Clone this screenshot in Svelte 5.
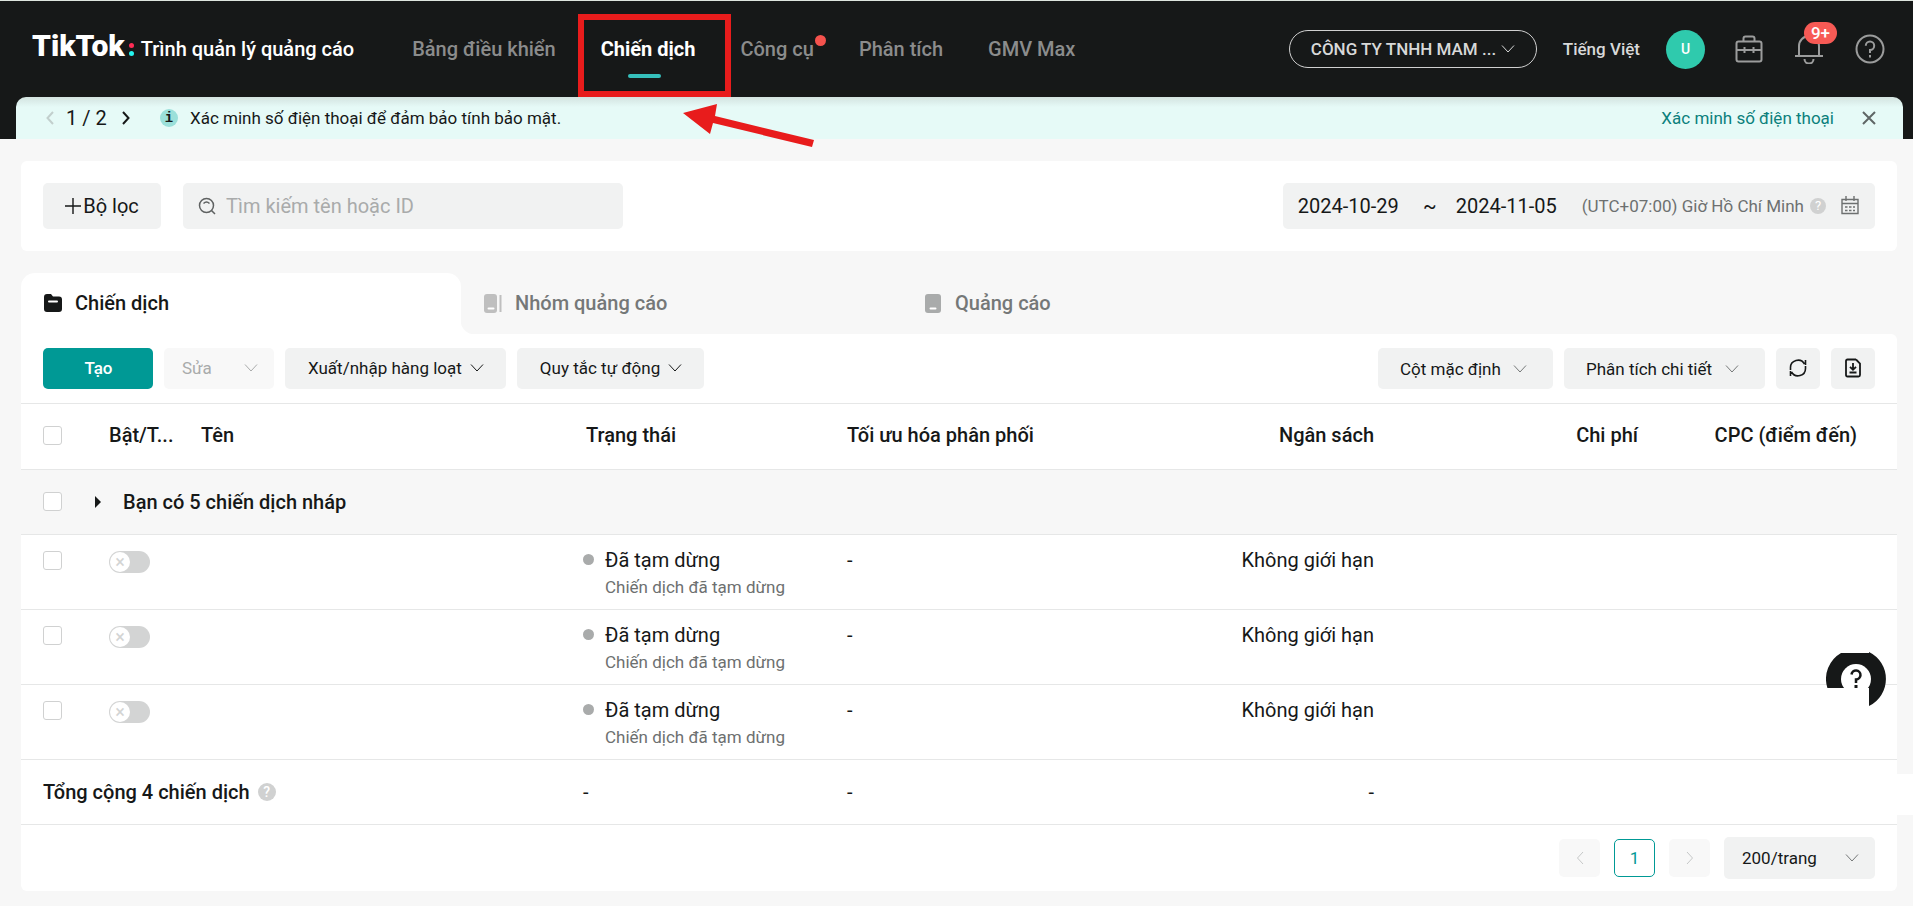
<script>
	const navItems = [
		{ label: "Bảng điều khiển" },
		{ label: "Chiến dịch", active: true },
		{ label: "Công cụ", dot: true },
		{ label: "Phân tích" },
		{ label: "GMV Max" },
	];

	const rows = [1, 2, 3];

	let search = "";
	let startDate = "2024-10-29";
	let endDate = "2024-11-05";
</script>

<header class="header">
	<a class="brand" href="#home">
		<strong>TikTok</strong>
		<span class="brand-dots"><i></i><i></i></span>
		<span class="brand-name">Trình quản lý quảng cáo</span>
	</a>

	<nav class="nav">
		{#each navItems as item}
			<a class="nav-link" class:active={item.active} href="#nav">
				{item.label}
				{#if item.dot}<span class="nav-dot"></span>{/if}
				{#if item.active}
					<span class="highlight"></span>
					<svg class="arrow" width="132" height="46" viewBox="0 0 132 46">
						<path d="M0 11 L34 2 L32 14 L131 38 L129 45 L30 21 L27 32 Z" fill="#e81c1c" />
					</svg>
				{/if}
			</a>
		{/each}
	</nav>

	<div class="account">
		<button class="company">
			CÔNG TY TNHH MAM ...
			<svg width="14" height="10" viewBox="0 0 14 10"><path d="M1 1.5 L7 8 L13 1.5" /></svg>
		</button>
		<button class="plain">Tiếng Việt</button>
		<button class="avatar">U</button>
		<div class="tools">
			<button class="tool" aria-label="Hộp công cụ">
				<svg width="28" height="28" viewBox="0 0 28 28">
					<rect x="1.5" y="6.5" width="25" height="20" rx="2" />
					<path d="M8.5 6.5 V3.5 Q8.5 1.5 10.5 1.5 H17.5 Q19.5 1.5 19.5 3.5 V6.5 M1.5 15 H26.5 M9.5 12 V18 M18.5 12 V18" />
				</svg>
			</button>
			<button class="tool" aria-label="Thông báo">
				<svg width="30" height="30" viewBox="0 0 30 30">
					<path d="M1 22 H29 M5 22 V12 A10 10 0 0 1 25 12 V22 M10.5 25 A4.5 4.5 0 0 0 19.5 25" />
				</svg>
				<span class="badge">9+</span>
			</button>
			<button class="tool" aria-label="Trợ giúp">
				<svg width="30" height="30" viewBox="0 0 30 30">
					<circle cx="15" cy="15" r="13.5" />
					<path d="M10.8 11.8 A4.2 4.2 0 1 1 15 16 V19 M15 21 V23.5" />
				</svg>
			</button>
		</div>
	</div>
</header>

<div class="banner-wrap">
	<div class="banner">
		<button class="step muted" aria-label="Trước" disabled>
			<svg width="8" height="14" viewBox="0 0 8 14"><path d="M7 1 L1.5 7 L7 13" /></svg>
		</button>
		<span class="count">1 / 2</span>
		<button class="step" aria-label="Sau">
			<svg width="8" height="14" viewBox="0 0 8 14"><path d="M1 1 L6.5 7 L1 13" /></svg>
		</button>
		<span class="info">i</span>
		<span>Xác minh số điện thoại để đảm bảo tính bảo mật.</span>
		<a class="verify" href="#verify">Xác minh số điện thoại</a>
		<button class="step close" aria-label="Đóng">
			<svg width="14" height="14" viewBox="0 0 14 14"><path d="M1 1 L13 13 M13 1 L1 13" /></svg>
		</button>
	</div>
</div>

<main>
	<section class="filters">
		<button class="filter">
			<svg width="16" height="16" viewBox="0 0 16 16"><path d="M8 0 V16 M0 8 H16" /></svg>
			Bộ lọc
		</button>
		<label class="search">
			<svg width="18" height="18" viewBox="0 0 18 18">
				<circle cx="8.5" cy="8.5" r="7" />
				<path d="M13.5 13.5 L17 17 M5.5 6.5 Q8.5 3.5 11.5 6.5" />
			</svg>
			<input type="text" placeholder="Tìm kiếm tên hoặc ID" aria-label="Tìm kiếm tên hoặc ID" bind:value={search} />
		</label>
		<div class="dates">
			<input type="text" aria-label="Ngày bắt đầu" bind:value={startDate} />
			<span class="tilde">~</span>
			<input type="text" aria-label="Ngày kết thúc" bind:value={endDate} />
			<span class="zone">(UTC+07:00) Giờ Hồ Chí Minh</span>
			<span class="hint small">?</span>
			<button class="calendar" aria-label="Lịch">
				<svg width="18" height="20" viewBox="0 0 18 20">
					<path d="M1 3.5 H17 V17.5 H1 Z M1 7.5 H17 M5 0 V5 M13 0 V5" />
					<path d="M4 11 H14 M4 14.500 H14" stroke-dasharray="2.5 1.5" />
				</svg>
			</button>
		</div>
	</section>

	<div class="tabs" role="tablist">
		<button class="tab active" role="tab" aria-selected="true">
			<svg width="18" height="18" viewBox="0 0 18 18">
				<path d="M0 3 Q0 0 3 0 H7 L9 2.5 H15 Q18 2.5 18 5.5 V15 Q18 18 15 18 H3 Q0 18 0 15 Z" fill="#161818" />
				<path d="M5 7.5 H13" stroke="#fff" stroke-width="2" stroke-linecap="round" />
			</svg>
			Chiến dịch
		</button>
		<button class="tab" role="tab" aria-selected="false">
			<svg width="18" height="19" viewBox="0 0 18 19">
				<rect width="13" height="19" rx="3" fill="#bfbfbf" />
				<path d="M4.5 14.5 H9.5" stroke="#fff" stroke-width="2" stroke-linecap="round" />
				<path d="M16.5 1 V18" stroke="#bfbfbf" stroke-width="2" />
			</svg>
			Nhóm quảng cáo
		</button>
		<button class="tab" role="tab" aria-selected="false">
			<svg width="18" height="19" viewBox="0 0 18 19">
				<rect x="1" width="16" height="19" rx="3" fill="#a9abab" />
				<path d="M6.5 14.5 H11.5" stroke="#fff" stroke-width="2" stroke-linecap="round" />
			</svg>
			Quảng cáo
		</button>
	</div>

	<section class="card">
		<div class="toolbar">
			<button class="btn primary">Tạo</button>
			<button class="btn edit" disabled>
				Sửa
				<svg width="14" height="10" viewBox="0 0 14 10"><path d="M1 1.5 L7 8 L13 1.5" /></svg>
			</button>
			<button class="btn">
				Xuất/nhập hàng loạt
				<svg width="14" height="10" viewBox="0 0 14 10"><path d="M1 1.5 L7 8 L13 1.5" /></svg>
			</button>
			<button class="btn">
				Quy tắc tự động
				<svg width="14" height="10" viewBox="0 0 14 10"><path d="M1 1.5 L7 8 L13 1.5" /></svg>
			</button>
			<span class="select columns">
				<select aria-label="Cột"><option>Cột mặc định</option></select>
				<svg width="14" height="10" viewBox="0 0 14 10"><path d="M1 1.5 L7 8 L13 1.5" /></svg>
			</span>
			<span class="select breakdown">
				<select aria-label="Phân tích"><option>Phân tích chi tiết</option></select>
				<svg width="14" height="10" viewBox="0 0 14 10"><path d="M1 1.5 L7 8 L13 1.5" /></svg>
			</span>
			<button class="btn icon" aria-label="Làm mới">
				<svg width="18" height="18" viewBox="0 0 18 18">
					<path d="M1.5 11 V9 A7.5 7.5 0 0 1 15.5 5 M16.5 1 V6 M16.5 7 V9 A7.5 7.5 0 0 1 2.5 13 M1.5 17 V12" stroke-width="1.6" />
				</svg>
			</button>
			<button class="btn icon" aria-label="Tải xuống">
				<svg width="18" height="20" viewBox="0 0 18 20">
					<path d="M12 1.5 L16 5.5 V17 Q16 18.5 14.5 18.5 H3.5 Q2 18.5 2 17 V3 Q2 1.5 3.5 1.5 H12 M9 5 V11.5 M6 8.8 L9 11.8 L12 8.8 M5.5 14.5 H12.5" stroke-width="1.8" />
				</svg>
			</button>
		</div>

		<table>
			<colgroup>
				<col class="c-check" />
				<col class="c-switch" />
				<col />
				<col class="c-status" />
				<col class="c-delivery" />
				<col class="c-budget" />
				<col class="c-cost" />
				<col class="c-cpc" />
			</colgroup>
			<thead>
				<tr>
					<th><input type="checkbox" aria-label="Chọn tất cả" /></th>
					<th>Bật/T...</th>
					<th>Tên</th>
					<th class="status-head">Trạng thái</th>
					<th>Tối ưu hóa phân phối</th>
					<th class="num">Ngân sách</th>
					<th class="num">Chi phí</th>
					<th class="num">CPC (điểm đến)</th>
				</tr>
			</thead>
			<tbody>
				<tr class="drafts">
					<td colspan="8">
						<div class="draft">
							<input type="checkbox" aria-label="Chọn chiến dịch nháp" />
							<button class="expand" aria-label="Mở rộng">
								<svg width="6" height="12" viewBox="0 0 6 12"><path d="M0 0 L6 6 L0 12 Z" /></svg>
							</button>
							<span>Bạn có 5 chiến dịch nháp</span>
						</div>
					</td>
				</tr>
				{#each rows as row}
					<tr class="campaign">
						<td><input type="checkbox" aria-label={`Chọn chiến dịch ${row}`} /></td>
						<td><input class="switch" type="checkbox" role="switch" aria-label={`Bật chiến dịch ${row}`} /></td>
						<td></td>
						<td>
							<div class="status">Đã tạm dừng</div>
							<div class="status-note">Chiến dịch đã tạm dừng</div>
						</td>
						<td>-</td>
						<td class="num">Không giới hạn</td>
						<td></td>
						<td></td>
					</tr>
				{/each}
			</tbody>
			<tfoot>
				<tr>
					<td colspan="3">
						<div class="total">Tổng cộng 4 chiến dịch <span class="hint">?</span></div>
					</td>
					<td>-</td>
					<td>-</td>
					<td class="num">-</td>
					<td></td>
					<td></td>
				</tr>
			</tfoot>
		</table>

		<div class="pagination">
			<button class="page" aria-label="Trang trước" disabled>
				<svg width="8" height="14" viewBox="0 0 8 14"><path d="M7 1 L1.5 7 L7 13" /></svg>
			</button>
			<button class="page current">1</button>
			<button class="page" aria-label="Trang sau" disabled>
				<svg width="8" height="14" viewBox="0 0 8 14"><path d="M1 1 L6.5 7 L1 13" /></svg>
			</button>
			<span class="select size">
				<select aria-label="Số dòng mỗi trang"><option>200/trang</option></select>
				<svg width="14" height="10" viewBox="0 0 14 10"><path d="M1 1.5 L7 8 L13 1.5" /></svg>
			</span>
		</div>
	</section>
</main>

<span class="side-tab"></span>
<button class="help" aria-label="Hỗ trợ">
	<svg width="60" height="60" viewBox="0 0 60 60">
		<path d="M1.4 39 A30 30 0 0 1 15 4 H43 V3 A30 30 0 0 1 43 57 V39 Z" fill="#161818" />
		<circle cx="30" cy="30" r="15" fill="#fff" />
		<path d="M0 39 H43 V60 H0 Z" fill="#fff" />
		<path d="M25.5 25.5 A4.5 4.5 0 1 1 30 30.5 V34" fill="none" stroke="#161818" stroke-width="2.5" />
		<path d="M28.5 36 H31.5 V39 H28.5 Z" fill="#161818" />
	</svg>
</button>

<style>
	:global(body) {
		margin: 0;
		background: #f7f7f7;
		color: #161818;
		font-family: Roboto, "Liberation Sans", sans-serif;
		font-size: 20px;
		line-height: 28px;
	}

	:global(#app *) {
		box-sizing: border-box;
	}

	button,
	input,
	select {
		margin: 0;
		border: 0;
		background: none;
		padding: 0;
		color: inherit;
		font: inherit;
	}

	button {
		cursor: pointer;
	}

	a {
		color: inherit;
		text-decoration: none;
	}

	svg {
		flex: none;
		fill: none;
		stroke: currentColor;
		stroke-width: 1;
	}

	.header {
		display: flex;
		align-items: center;
		border-top: 1px solid #dde5de;
		background: #161818;
		padding: 0 28px 0 32px;
		height: 97px;
		color: #fff;
		white-space: nowrap;
	}

	.brand {
		display: flex;
		align-items: center;
		margin-right: 58px;
	}

	.brand strong {
		font-size: 30px;
		font-weight: 900;
		line-height: 36px;
		margin-bottom: 6px;
	}

	.brand-dots {
		display: grid;
		gap: 3px;
		margin: 0 7px 0 4px;
	}

	.brand-dots i {
		border-radius: 50%;
		background: #fe2c55;
		width: 5px;
		height: 5px;
	}

	.brand-dots i:last-child {
		background: #25f4ee;
	}

	.brand-name {
		font-weight: 500;
	}

	.nav {
		display: flex;
		gap: 45px;
	}

	.nav-link {
		position: relative;
		color: #8b8c8c;
		font-weight: 500;
	}

	.nav-link.active {
		color: #fff;
		font-weight: 700;
	}

	.nav-link.active::after {
		position: absolute;
		top: 39px;
		left: calc(50% - 20px);
		border-radius: 2px;
		background: #35bfbb;
		width: 33px;
		height: 4px;
		content: "";
	}

	.nav-dot {
		position: absolute;
		top: 0;
		right: -12px;
		border-radius: 50%;
		background: #f4524d;
		width: 11px;
		height: 11px;
	}

	.highlight {
		position: absolute;
		top: -21px;
		left: -23px;
		border: 6px solid #e81c1c;
		width: 153px;
		height: 83px;
	}

	.arrow {
		position: absolute;
		top: 67px;
		left: 82px;
		stroke: none;
	}

	.account {
		display: flex;
		align-items: center;
		gap: 26px;
		margin-left: auto;
		font-size: 17px;
		font-weight: 500;
		color: #d8d9d9;
	}

	.company {
		display: flex;
		align-items: center;
		justify-content: space-between;
		border: 1px solid #d0d0d0;
		border-radius: 19px;
		padding: 0 21px;
		width: 248px;
		height: 38px;
	}

	.avatar {
		border-radius: 50%;
		background: #2fcaad;
		width: 39px;
		height: 39px;
		color: #fff;
		font-size: 14px;
	}

	.tools {
		display: flex;
		align-items: center;
		gap: 31px;
		margin-left: 4px;
	}

	.tool {
		display: flex;
		position: relative;
		color: #9b9c9c;
	}

	.tool svg {
		stroke-width: 2;
	}

	.badge {
		position: absolute;
		top: -12px;
		left: 10px;
		border-radius: 11px;
		background: #f75a55;
		width: 33px;
		height: 22px;
		color: #fff;
		line-height: 22px;
	}

	.banner-wrap {
		background: #161818;
		padding: 0 10px 0 16px;
	}

	.banner {
		display: flex;
		align-items: center;
		border-radius: 10px 10px 0 0;
		background: linear-gradient(#d3e3e0, #e6faf7 10px);
		padding: 0 27px 0 30px;
		height: 42px;
		font-size: 17px;
	}

	.step {
		display: flex;
	}

	.step svg {
		stroke-width: 2;
	}

	.step.muted {
		color: #c2cfcd;
	}

	.step.close {
		color: #5f6666;
	}

	.count {
		margin: 0 12px;
		width: 44px;
		font-size: 20px;
	}

	.info {
		margin: 0 12px 0 30px;
		border-radius: 50%;
		background: #9be0da;
		width: 18px;
		height: 18px;
		font-family: "Liberation Mono", monospace;
		font-size: 14px;
		font-weight: 700;
		line-height: 18px;
		text-align: center;
	}

	.verify {
		margin-left: auto;
		margin-right: 28px;
		color: #0b807c;
	}

	main {
		padding: 22px 16px 15px 21px;
	}

	.filters {
		display: flex;
		align-items: center;
		gap: 22px;
		border-radius: 6px;
		background: #fff;
		padding: 22px;
		margin-bottom: 22px;
	}

	.filter,
	.search,
	.dates {
		display: flex;
		align-items: center;
		border-radius: 5px;
		background: #f1f2f2;
		height: 46px;
	}

	.filter {
		justify-content: center;
		gap: 2px;
		width: 118px;
	}

	.filter path {
		stroke-width: 1.4;
	}

	.search {
		gap: 10px;
		padding: 0 15px;
		width: 440px;
	}

	.search svg {
		color: #5f6262;
	}

	.search circle,
	.search path {
		stroke-width: 1.5;
	}

	.search input {
		flex: 1;
		min-width: 0;
	}

	.search input::placeholder {
		color: #a9abab;
		opacity: 1;
	}

	.dates {
		margin-left: auto;
		padding: 0 16px 0 15px;
	}

	.dates input {
		width: 106px;
	}

	.tilde {
		width: 52px;
		text-align: center;
	}

	.zone {
		margin: 0 6px 0 20px;
		color: #6d7070;
		font-size: 17px;
	}

	.hint {
		border-radius: 50%;
		background: #d0d1d1;
		width: 18px;
		height: 18px;
		color: #fff;
		font-size: 14px;
		line-height: 18px;
		text-align: center;
	}

	.hint.small {
		width: 16px;
		height: 16px;
		font-size: 13px;
		line-height: 16px;
	}

	.calendar {
		display: flex;
		margin-left: 15px;
		color: #6d7070;
	}

	.calendar path {
		stroke-width: 1.4;
	}

	.tabs {
		display: flex;
	}

	.tab {
		display: flex;
		position: relative;
		align-items: center;
		gap: 13px;
		padding: 0 23px 1px;
		width: 440px;
		height: 61px;
		color: #757878;
		font-weight: 500;
	}

	.tab svg {
		stroke: none;
	}

	.tab.active {
		border-radius: 14px 14px 0 0;
		background: #fff;
		color: #161818;
	}

	.tab.active::after {
		position: absolute;
		bottom: 0;
		left: 100%;
		background: radial-gradient(circle at 100% 0, transparent 14px, #fff 15px);
		width: 14px;
		height: 14px;
		content: "";
	}

	.card {
		border-radius: 0 6px 6px 6px;
		background: #fff;
	}

	.toolbar {
		display: flex;
		gap: 11px;
		border-bottom: 1px solid #e6e7e7;
		padding: 14px 22px;
	}

	.btn {
		display: flex;
		justify-content: center;
		align-items: center;
		gap: 8px;
		border-radius: 5px;
		background: #f1f2f2;
		padding: 0 22px 2px 23px;
		height: 41px;
		font-size: 17px;
	}

	.btn.primary {
		background: #009995;
		width: 110px;
		color: #fff;
		font-weight: 500;
	}

	.btn.edit {
		justify-content: space-between;
		background: #f8f8f8;
		padding: 0 16px 2px 18px;
		width: 110px;
		color: #a9abab;
	}

	.btn.icon {
		padding: 0 0 2px;
		width: 44px;
	}

	.select {
		display: grid;
		align-items: center;
		font-size: 17px;
	}

	.select select {
		grid-area: 1 / 1;
		appearance: none;
		border-radius: 5px;
		background: #f1f2f2;
		padding: 0 22px;
		height: 41px;
	}

	.select svg {
		grid-area: 1 / 1;
		justify-self: end;
		margin-right: 26px;
		color: #757878;
		pointer-events: none;
	}

	.select.columns {
		margin-left: auto;
		width: 175px;
	}

	.select.breakdown {
		width: 201px;
	}

	.select.size {
		width: 151px;
	}

	.select.size select {
		padding: 0 18px;
		height: 42px;
	}

	.select.size svg {
		margin-right: 16px;
	}

	table {
		border-collapse: collapse;
		width: 100%;
		table-layout: fixed;
	}

	.c-check {
		width: 76px;
	}

	.c-switch {
		width: 92px;
	}

	.c-status {
		width: 264px;
	}

	.c-delivery {
		width: 279px;
	}

	.c-budget {
		width: 272px;
	}

	.c-cost {
		width: 264px;
	}

	.c-cpc {
		width: 247px;
	}

	tr {
		border-bottom: 1px solid #e6e7e7;
		height: 65px;
	}

	th,
	td {
		padding: 0 12px;
		text-align: left;
		white-space: nowrap;
	}

	th {
		padding-bottom: 2px;
		font-weight: 500;
	}

	th:first-child,
	td:first-child {
		padding-left: 22px;
	}

	.status-head {
		padding-left: 15px;
	}

	.num {
		text-align: right;
	}

	th:last-child {
		padding-right: 40px;
	}

	.drafts {
		background: #f7f7f7;
		font-weight: 500;
	}

	.campaign {
		height: 75px;
	}

	.campaign td {
		padding-top: 11px;
		vertical-align: top;
	}

	input[type="checkbox"] {
		display: block;
		appearance: none;
		border: 1px solid #d0d1d1;
		border-radius: 3px;
		background: #fff;
		width: 19px;
		height: 19px;
	}

	.campaign input[type="checkbox"] {
		margin-top: 5px;
	}

	input.switch[type="checkbox"] {
		border: 0;
		border-radius: 11px;
		background: #d3d4d4;
		padding: 1px;
		width: 41px;
		height: 22px;
	}

	.switch::before {
		display: block;
		border-radius: 50%;
		background: #fff;
		width: 20px;
		height: 20px;
		color: #d3d4d4;
		content: "×";
		font-size: 18px;
		line-height: 20px;
		text-align: center;
	}

	.draft,
	.total {
		display: flex;
		align-items: center;
	}

	.expand {
		display: flex;
		margin: 0 22px 0 33px;
	}

	.expand svg {
		fill: #161818;
		stroke: none;
	}

	.status {
		display: flex;
		align-items: center;
		gap: 11px;
	}

	.status::before {
		border-radius: 50%;
		background: #a9abab;
		width: 11px;
		height: 11px;
		content: "";
	}

	.status-note {
		padding-left: 22px;
		color: #6d7070;
		font-size: 17px;
		line-height: 26px;
	}

	.total {
		gap: 8px;
		font-weight: 500;
	}

	.pagination {
		display: flex;
		justify-content: flex-end;
		align-items: center;
		gap: 14px;
		padding: 12px 22px;
	}

	.page {
		display: flex;
		justify-content: center;
		align-items: center;
		border-radius: 5px;
		background: #f8f8f8;
		width: 41px;
		height: 38px;
		color: #c6c8c8;
		font-size: 17px;
	}

	.page.current {
		border: 1px solid #009995;
		background: #fff;
		color: #009995;
	}

	.side-tab {
		position: fixed;
		right: 0;
		bottom: 91px;
		background: #fff;
		width: 16px;
		height: 41px;
	}

	.help {
		display: flex;
		position: fixed;
		right: 27px;
		bottom: 197px;
	}

	.help svg {
		stroke: none;
	}
</style>
